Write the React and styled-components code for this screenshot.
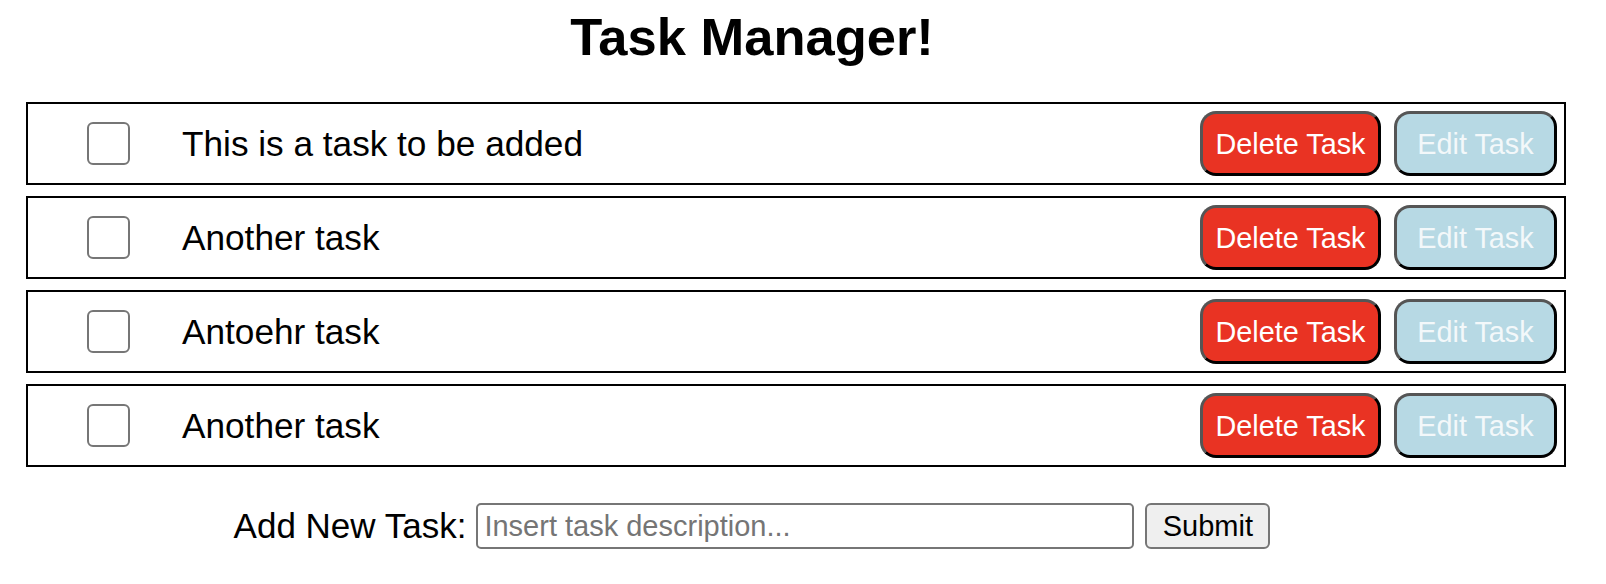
import React from "react";
import styled, { createGlobalStyle } from "styled-components";

const GlobalStyle = createGlobalStyle`
  html, body {
    margin: 0;
    padding: 0;
    background: #ffffff;
    font-family: "Liberation Sans", Arial, Helvetica, sans-serif;
    color: #000;
  }
`;

const Page = styled.div`
  padding-top: 7px;
  width: 1606px;
`;

const Title = styled.h1`
  margin: 0;
  width: 1504px;
  text-align: center;
  font-size: 52.5px;
  line-height: 60px;
  font-weight: 700;
`;

const TaskList = styled.div`
  margin: 35px 0 0 26px;
  width: 1540px;
  display: flex;
  flex-direction: column;
  gap: 11px;
`;

const Row = styled.div`
  box-sizing: border-box;
  height: 83px;
  border: 2px solid #000;
  display: flex;
  align-items: center;
  padding: 0 7px 0 59px;
`;

const Check = styled.input.attrs({ type: "checkbox" })`
  appearance: none;
  -webkit-appearance: none;
  box-sizing: border-box;
  width: 43px;
  height: 43px;
  margin: 0;
  border: 2px solid #767676;
  border-radius: 6px;
  background: #fff;
  flex: none;
`;

const TaskText = styled.span`
  flex: 1;
  margin-left: 52px;
  font-size: 35.2px;
  line-height: 40px;
`;

const ActionButton = styled.button`
  box-sizing: border-box;
  width: ${(p) => p.$w}px;
  height: 65px;
  margin-left: ${(p) => p.$ml || 0}px;
  padding: 0;
  border: 3px solid;
  border-color: #555 #000 #000 #555;
  border-radius: 16px;
  background: ${(p) => p.$bg};
  color: ${(p) => p.$fg};
  font-family: "Liberation Sans", Arial, Helvetica, sans-serif;
  font-size: 28.8px;
  line-height: 32px;
  flex: none;
`;

const Form = styled.form`
  margin-top: 36px;
  width: 1504px;
  display: flex;
  justify-content: center;
  align-items: center;
  gap: 10px;
`;

const Label = styled.label`
  font-size: 35px;
  line-height: 40px;
`;

const TextInput = styled.input`
  box-sizing: border-box;
  width: 658px;
  height: 46px;
  margin: 0;
  padding: 0 6px;
  border: 2px solid #767676;
  border-radius: 5px;
  font-family: "Liberation Sans", Arial, Helvetica, sans-serif;
  font-size: 29px;
  color: #000;
  &::placeholder {
    color: #757575;
  }
`;

const SubmitButton = styled.button`
  box-sizing: border-box;
  width: 125px;
  height: 46px;
  margin-left: 1px;
  padding: 0;
  border: 2px solid #767676;
  border-radius: 6px;
  background: #efefef;
  color: #000;
  font-family: "Liberation Sans", Arial, Helvetica, sans-serif;
  font-size: 29px;
`;

const tasks = [
  "This is a task to be added",
  "Another task",
  "Antoehr task",
  "Another task",
];

export default function App() {
  return (
    <Page>
      <GlobalStyle />
      <Title>Task Manager!</Title>
      <TaskList>
        {tasks.map((t, i) => (
          <Row key={i}>
            <Check />
            <TaskText>{t}</TaskText>
            <ActionButton $w={181} $bg="#e93323" $fg="#ffffff">
              Delete Task
            </ActionButton>
            <ActionButton $w={163} $ml={13} $bg="#b7d9e4" $fg="#f3f8fa">
              Edit Task
            </ActionButton>
          </Row>
        ))}
      </TaskList>
      <Form onSubmit={(e) => e.preventDefault()}>
        <Label>Add New Task:</Label>
        <TextInput placeholder="Insert task description..." />
        <SubmitButton type="submit">Submit</SubmitButton>
      </Form>
    </Page>
  );
}
